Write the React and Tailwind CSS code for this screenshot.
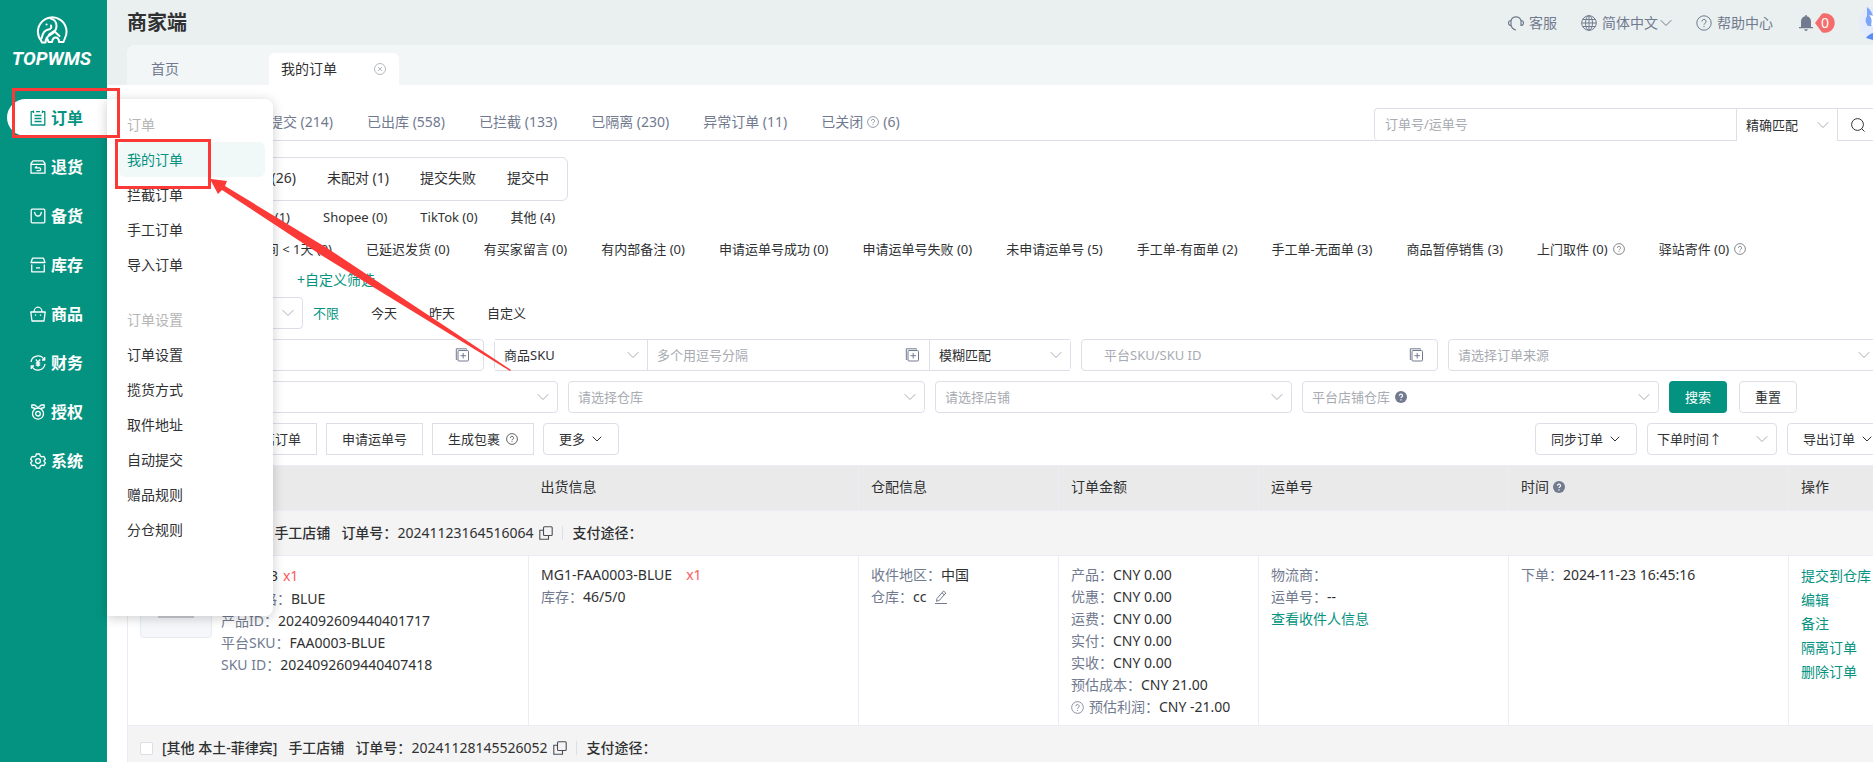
import clsx from 'clsx'

const SIDE_MENU = [
  { key: 'order', label: '订单', active: true },
  { key: 'return', label: '退货' },
  { key: 'stock', label: '备货' },
  { key: 'inventory', label: '库存' },
  { key: 'goods', label: '商品' },
  { key: 'finance', label: '财务' },
  { key: 'auth', label: '授权' },
  { key: 'system', label: '系统' },
]

const SUB_MENU = [
  { title: '订单', items: ['我的订单', '拦截订单', '手工订单', '导入订单'] },
  { title: '订单设置', items: ['订单设置', '揽货方式', '取件地址', '自动提交', '赠品规则', '分仓规则'] },
]

const STATUS_TABS = [
  { label: '已出库 (558)' },
  { label: '已拦截 (133)' },
  { label: '已隔离 (230)' },
  { label: '异常订单 (11)' },
  { label: '已关闭', help: true, count: '(6)' },
]

const TAG_FILTERS = [
  { label: '已延迟发货 (0)' },
  { label: '有买家留言 (0)' },
  { label: '有内部备注 (0)' },
  { label: '申请运单号成功 (0)' },
  { label: '申请运单号失败 (0)' },
  { label: '未申请运单号 (5)' },
  { label: '手工单-有面单 (2)' },
  { label: '手工单-无面单 (3)' },
  { label: '商品暂停销售 (3)' },
  { label: '上门取件 (0)', help: true },
  { label: '驿站寄件 (0)', help: true },
]

const AMOUNTS = [
  ['产品', 'CNY 0.00'],
  ['优惠', 'CNY 0.00'],
  ['运费', 'CNY 0.00'],
  ['实付', 'CNY 0.00'],
  ['实收', 'CNY 0.00'],
  ['预估成本', 'CNY 21.00'],
]

const MENU_ICONS = {
  order: (
    <>
      <path d="M3.500 1.700H1.200v13.300h13.600V1.700h-2.300M6 1.700h4" />
      <path d="M3.500.5v2.500M12.500.5v2.500M4.500 5.500h7M4.500 8.500h7M4.500 11.500h7" />
    </>
  ),
  return: (
    <>
      <path d="M3 1.800h10l2 2.700v9.700H1V4.500zM1 5.300h14" />
      <path d="M6.800 7.200 5.300 8.800h4a1.400 1.400 0 0 1 0 2.800H6.500" />
    </>
  ),
  stock: (
    <>
      <rect x="1.200" y="1.200" width="13.600" height="13.600" rx="1" />
      <path d="M4.500 3.800c.5 3 2 4.200 3.500 4.200s3-1.200 3.500-4.200" />
    </>
  ),
  inventory: (
    <>
      <path d="M2.500 1.200h11L15 5.500H1z" />
      <path d="M1.700 7.500v7.300h12.600V7.500M6 10.800h4" />
    </>
  ),
  goods: (
    <>
      <path d="M.8 6h14.400L14 15H2z" />
      <path d="M4 6a4 4.800 0 0 1 8 0M5.500 8.500v1.200M10.500 8.500v1.200" />
    </>
  ),
  finance: (
    <>
      <path d="M1 7A7 7 0 0 1 14 4.500M15 9A7 7 0 0 1 2 11.500" />
      <path d="M14.700 2v3H12M1.300 14v-3H4" />
      <path d="M5.800 4.500 8 7.200l2.200-2.700M8 7.200v4.500M5.800 8h4.400M5.800 10h4.400" />
    </>
  ),
  auth: (
    <>
      <circle cx="8" cy="9.700" r="5.500" />
      <circle cx="8" cy="9.700" r="2.300" />
      <path d="M5.500 4.500 1.800 3.500V1h3L8 3.700 11.200 1h3v2.500l-3.700 1" />
    </>
  ),
  system: (
    <>
      <path d="M6.300 1h3.400l.6 2 1.500.9 2-.5 1.600 2.900L14 7.800v.6l1.400 1.400-1.600 2.900-2-.5-1.500.9-.6 2H6.300l-.6-2-1.500-.9-2 .5L.6 9.800 2 8.400v-.6L.6 6.300l1.600-2.900 2 .5 1.500-.9z" />
      <circle cx="8" cy="8" r="2.400" />
    </>
  ),
}

const MenuIcon = ({ name }) => (
  <svg viewBox="0 0 16 16" className="h-4 w-4 shrink-0" fill="none" stroke="currentColor" strokeWidth="1.300" strokeLinejoin="round">
    {MENU_ICONS[name]}
  </svg>
)

const Chevron = ({ className }) => (
  <svg viewBox="0 0 12 8" className={clsx('h-2 w-3 shrink-0', className)} fill="none" stroke="currentColor">
    <path d="M.7 1.200 6 6.500l5.300-5.300" />
  </svg>
)

// smaller chevron used inside buttons
const ButtonChevron = () => (
  <svg viewBox="0 0 10 8" className="mx-px h-2 w-2.5 shrink-0" fill="none" stroke="currentColor">
    <path d="M.7 1.700 5 6l4.300-4.300" />
  </svg>
)

const HelpIcon = ({ className }) => (
  <svg viewBox="0 0 16 16" className={clsx('shrink-0', className)} fill="none" stroke="currentColor">
    <circle cx="8" cy="8" r="7.200" />
    <path d="M5.900 6.500a2.100 2.100 0 1 1 3 1.900c-.6.3-.9.600-.9 1.300" />
    <path d="M8 11v1.200" />
  </svg>
)

const HelpSolid = ({ className }) => (
  <svg viewBox="0 0 16 16" className={clsx('h-3 w-3 shrink-0', className)} fill="none" stroke="#fff" strokeWidth="1.600">
    <circle cx="8" cy="8" r="8" fill="#717a8f" stroke="none" />
    <path d="M5.900 6.200a2.100 2.100 0 1 1 3 1.900c-.6.3-.9.600-.9 1.300M8 11v1.700" />
  </svg>
)

const CopyIcon = () => (
  <svg viewBox="0 0 14 14" className="h-3.5 w-3.5" fill="none" stroke="#4a4d55" strokeWidth="1.100">
    <rect x="4.500" y=".8" width="8.700" height="8.700" rx="1" />
    <path d="M4.500 4.200H.8v9h8.700V9.500" />
  </svg>
)

const BatchIcon = () => (
  <svg viewBox="0 0 14 14" className="h-3.5 w-3.5 shrink-0" fill="none" stroke="#717a8f" strokeWidth="1">
    <path d="M11.500 1.500V.8H1.300v10.700h.9" />
    <rect x="3" y="2.500" width="10.500" height="10.500" rx="1" />
    <path d="M8.200 5v5.500M5.500 7.700H11" />
  </svg>
)

const Logo = () => (
  <div className="flex flex-col items-center pt-4 pr-1">
    <svg viewBox="0 0 32 28" className="h-7 w-8" fill="none" stroke="#fff" strokeWidth="2" strokeLinecap="round" strokeLinejoin="round">
      <path d="M5 24.500A14.300 14.300 0 1 1 29 22l-1.500 4H23c0-3-1.500-4.500-3.500-4.500S16.500 23 16 26h-3.500l-1-3" />
      <path d="M5 24.500 6 26.500h3.500c.2-4 1.500-6 4.500-7.500 4-2 6.500-4.500 6.500-9 0-4-2.500-7-6-7.500" />
      <path d="M15 9.500c1 2-.5 4-2.500 4-4 .5-6 4-7 9M13 18.500l5-3.500 5.500 5" />
      <path d="M10.500 8.500h.1" />
    </svg>
    <div className="mt-[3px] font-['Liberation_Sans_Narrow','Roboto',sans-serif] text-[19px] leading-6 font-bold text-white italic">TOPWMS</div>
  </div>
)

const Sidebar = () => (
  <aside className="w-[107px] shrink-0 bg-[#059381]">
    <Logo />
    <nav className="mt-6 flex flex-col gap-3 pt-1 pl-[7px]">
      {SIDE_MENU.map((item) => (
        <a
          key={item.key}
          href="#"
          className={clsx(
            'flex h-[37px] items-center gap-[5px] rounded-l-full pl-[23px] text-base font-bold',
            item.active ? 'bg-white text-[#059381]' : 'text-white'
          )}
        >
          <MenuIcon name={item.key} />
          {item.label}
        </a>
      ))}
    </nav>
  </aside>
)

const FlyoutMenu = () => (
  <div className="absolute top-[99px] left-[107px] z-20 h-[517px] w-[166px] rounded-r-lg bg-white pt-2 pr-2 pl-3 shadow-[0_2px_12px_rgba(0,0,0,0.2)]">
    {SUB_MENU.map((group) => (
      <div key={group.title} className="mb-5">
        <div className="h-[35px] pl-2 leading-[35px] text-[#b5b5b5]">{group.title}</div>
        {group.items.map((item) => (
          <a
            key={item}
            href="#"
            className={clsx(
              'block h-[35px] rounded-md pl-2 leading-[35px]',
              item === '我的订单' ? 'bg-[#f1f9f8] text-[#059381]' : 'text-[#303133]'
            )}
          >
            {item}
          </a>
        ))}
      </div>
    ))}
  </div>
)

const Header = () => (
  <header className="flex h-[45px] items-center justify-between bg-[#eaf0ef] pl-5 text-[#717a8f]">
    <h1 className="text-xl font-bold text-[#303133]">商家端</h1>
    <div className="-mr-5 flex items-center">
      <a href="#" className="flex items-center gap-[5px]">
        <svg viewBox="0 0 16 16" className="h-4 w-4" fill="none" stroke="currentColor" strokeWidth="1.200">
          <path d="M3 5.500A5.300 5.300 0 0 1 13 5.500M3 10.500c.8 2.500 2.500 4 5 4.500" />
          <path d="M3 5.500a2.500 2.500 0 0 0 0 5zM13 5.500a2.500 2.500 0 0 1 0 5z" />
        </svg>
        客服
      </a>
      <button type="button" className="ml-6 flex items-center gap-[5px]">
        <svg viewBox="0 0 16 16" className="h-4 w-4" fill="none" stroke="currentColor">
          <circle cx="8" cy="8" r="7.300" />
          <ellipse cx="8" cy="8" rx="3.500" ry="7.300" />
          <path d="M8 .7v14.600M.7 8h14.600M1.800 4.500h12.400M1.800 11.500h12.400" />
        </svg>
        <span className="flex items-center gap-[2px]">
          简体中文
          <Chevron />
        </span>
      </button>
      <a href="#" className="ml-6 flex items-center gap-[5px]">
        <HelpIcon className="h-4 w-4" />
        帮助中心
      </a>
      <button type="button" aria-label="通知" className="ml-[26px] flex items-center gap-[2px]">
        <svg viewBox="0 0 14 16" className="h-4 w-3.5" fill="currentColor">
          <path d="M6.300 0h1.400v1.300C10.300 1.600 12 3.700 12 6.300V12h2v1.300H0V12h2V6.300c0-2.600 1.700-4.700 4.300-5zM5.300 14.300h3.400c0 1-.7 1.700-1.700 1.700s-1.700-.7-1.700-1.700z" />
        </svg>
        <span className="relative flex h-5 w-5 items-center justify-center text-white">
          <svg viewBox="0 0 20 20" className="absolute h-5 w-5" fill="#f56c6c">
            <path d="M0 10 6 2a3 3 0 0 1 2.500-1.700A9.800 9.800 0 1 1 8.500 19.700 3 3 0 0 1 6 18z" />
          </svg>
          <span className="relative">0</span>
        </span>
      </button>
      <svg viewBox="0 0 34 34" className="ml-6 h-[34px] w-[34px]">
        <circle cx="17" cy="17" r="17" fill="#e4ebfd" />
        <path d="M8 1c4 3 5 6 6 9l10 2v8H9c-3-4-3-7-1-10z" fill="#7ea6f8" />
        <path d="M10 9c3 3 3 6 2 10l4 3V10z" fill="#fff" />
        <path d="M7 32c3-4 8-6 14-6v8H14z" fill="#5b8cf5" />
      </svg>
    </div>
  </header>
)

const PageTabs = () => (
  <div className="bg-[#eaf0ef] pl-5">
    <div className="flex h-10 items-end rounded-tl-lg bg-[#f2f6f7] pl-6">
      <a href="#" className="h-8 w-[118px] leading-8 text-[#717a8f]">首页</a>
      <div className="flex h-8 w-[130px] items-center justify-between rounded-t-md bg-white pr-[13px] pl-3 text-[#303133]">
        我的订单
        <button type="button" aria-label="关闭">
          <svg viewBox="0 0 12 12" className="h-3 w-3" fill="none" stroke="#b4b8c0">
            <circle cx="6" cy="6" r="5.500" />
            <path d="m4 4 4 4M8 4 4 8" />
          </svg>
        </button>
      </div>
    </div>
  </div>
)

const SelectBox = ({ label, value, placeholder, help, className }) => (
  <div className={clsx('relative flex h-8 items-center border-[#dcdee8] bg-white', className)}>
    <select
      aria-label={label}
      className={clsx(
        'h-full w-full appearance-none bg-transparent pr-8 pl-[9px] text-[13px] outline-none',
        placeholder ? 'text-[#a8abb2]' : 'text-[#303133]'
      )}
    >
      <option>{value}</option>
    </select>
    {help && <HelpSolid className="pointer-events-none absolute left-[92px]" />}
    <Chevron className="pointer-events-none absolute right-2 text-[#a8abb2]" />
  </div>
)

const BatchInput = ({ label, placeholder, className, inputClassName }) => (
  <div className={clsx('flex h-8 items-center border-[#dcdee8] bg-white', className)}>
    <input
      type="text"
      aria-label={label}
      placeholder={placeholder}
      className={clsx('h-full w-full min-w-0 text-[13px] outline-none placeholder:text-[#a8abb2]', inputClassName)}
    />
    <button type="button" aria-label="批量输入">
      <BatchIcon />
    </button>
  </div>
)

const StatusBar = () => (
  <div className="flex h-14 items-end justify-between border-b border-[#dcdee8]">
    <div className="flex h-9 items-center gap-[34px] text-[#717a8f]">
      <a href="#" className="w-[206px] text-right">已提交 (214)</a>
      {STATUS_TABS.map((tab) => (
        <a key={tab.label} href="#" className="flex items-center gap-1">
          {tab.label}
          {tab.help && <HelpIcon className="h-3 w-3" />}
          {tab.count}
        </a>
      ))}
    </div>
    <form className="flex h-8 w-[505px] rounded-sm border border-b-0 border-[#dcdee8]">
      <input
        type="text"
        aria-label="订单号/运单号"
        placeholder="订单号/运单号"
        className="min-w-0 flex-1 pl-2.5 text-[13px] outline-none placeholder:text-[#a8abb2]"
      />
      <SelectBox label="匹配方式" value="精确匹配" className="w-[101px] border-l" />
      <button type="button" aria-label="搜索" className="flex w-[41px] items-center justify-center border-l border-[#dcdee8]">
        <svg viewBox="0 0 14 14" className="h-3.5 w-3.5" fill="none" stroke="#303133">
          <circle cx="6.500" cy="6.500" r="5.900" />
          <path d="m10.700 10.700 2.800 2.800" />
        </svg>
      </button>
    </form>
  </div>
)

const QuickFilters = () => (
  <>
    <div className="mt-4 flex h-11 w-[441px] items-center gap-[31px] rounded-md border border-[#dcdee8] pr-[18px] pb-0.5">
      <a href="#" className="flex-1 text-right">已配对 (26)</a>
      <a href="#">未配对 (1)</a>
      <a href="#">提交失败</a>
      <a href="#">提交中</a>
    </div>
    <div className="flex h-[34px] items-center gap-[33px] pb-0.5 text-[13px]">
      <a href="#" className="w-[163px] text-right">Lazada (1)</a>
      <a href="#">Shopee (0)</a>
      <a href="#">TikTok (0)</a>
      <a href="#">其他 (4)</a>
    </div>
    <div className="flex h-7 items-center gap-[34px] text-[13px] whitespace-nowrap">
      <a href="#" className="w-[205px] text-right">剩余发货时间 &lt; 1天 (0)</a>
      {TAG_FILTERS.map((tag) => (
        <a key={tag.label} href="#" className="flex items-center gap-[5px]">
          {tag.label}
          {tag.help && <HelpIcon className="h-3 w-3 text-[#606266]" />}
        </a>
      ))}
    </div>
    <div className="flex h-[34px] items-center pl-[170px]">
      <button type="button" className="text-[#059381]">+自定义筛选</button>
    </div>
    <div className="flex h-8 items-center text-[13px]">
      <SelectBox label="时间类型" className="w-[176px] rounded-sm border" />
      <div className="ml-2.5 flex gap-8">
        <a href="#" className="text-[#059381]">不限</a>
        <a href="#">今天</a>
        <a href="#">昨天</a>
        <a href="#">自定义</a>
      </div>
    </div>
  </>
)

const SearchForm = () => (
  <form className="mt-2.5 flex flex-col gap-2.5">
    <div className="grid grid-cols-[357fr_577fr_357fr_431fr] gap-2.5">
      <BatchInput label="订单号" className="rounded-sm border pr-3.5" />
      <div className="flex rounded-sm border border-[#dcdee8]">
        <SelectBox label="SKU类型" value="商品SKU" className="-my-px w-[152px] border-y" />
        <BatchInput label="SKU" placeholder="多个用逗号分隔" className="-my-px flex-1 border-x border-y pr-2.5" inputClassName="pl-[9px]" />
        <SelectBox label="SKU匹配方式" value="模糊匹配" className="-my-px w-[140px] border-y" />
      </div>
      <BatchInput label="平台SKU" placeholder="平台SKU/SKU ID" className="rounded-sm border pr-3.5" inputClassName="pl-[22px]" />
      <SelectBox label="订单来源" value="请选择订单来源" placeholder className="rounded-sm border" />
    </div>
    <div className="grid grid-cols-[431fr_357fr_357fr_357fr_210fr] gap-2.5">
      <SelectBox label="物流" placeholder className="rounded-sm border" />
      <SelectBox label="仓库" value="请选择仓库" placeholder className="rounded-sm border" />
      <SelectBox label="店铺" value="请选择店铺" placeholder className="rounded-sm border" />
      <SelectBox label="平台店铺仓库" value="平台店铺仓库" placeholder help className="rounded-sm border" />
      <div className="flex gap-3 text-[13px]">
        <button type="button" className="h-8 w-[58px] rounded-sm bg-[#059381] text-white">搜索</button>
        <button type="button" className="h-8 w-[58px] rounded-sm border border-[#dcdee8]">重置</button>
      </div>
    </div>
  </form>
)

const Toolbar = () => (
  <div className="mt-2.5 -mr-2.5 flex justify-between text-[13px]">
    <div className="flex gap-[9px] pl-[106px]">
      <button type="button" className="h-8 border border-[#dcdee8] px-[15px]">隔离订单</button>
      <button type="button" className="h-8 border border-[#dcdee8] px-[15px]">申请运单号</button>
      <button type="button" className="flex h-8 items-center gap-1.5 border border-[#dcdee8] px-[15px]">
        生成包裹
        <HelpIcon className="h-3 w-3" />
      </button>
      <button type="button" className="flex h-8 items-center gap-1.5 rounded-sm border border-[#dcdee8] px-[15px]">
        更多
        <ButtonChevron />
      </button>
    </div>
    <div className="flex gap-2.5">
      <button type="button" className="flex h-8 items-center gap-1.5 rounded-sm border border-[#dcdee8] px-[15px]">
        同步订单
        <ButtonChevron />
      </button>
      <SelectBox label="排序" value="下单时间↑" className="w-[130px] rounded-sm border" />
      <button type="button" className="flex h-8 items-center gap-1.5 rounded-sm border border-[#dcdee8] px-[15px]">
        导出订单
        <ButtonChevron />
      </button>
    </div>
  </div>
)

const Field = ({ label, children }) => (
  <div className="flex h-[22px] items-center">
    <span className="text-[#717a8f]">{label}：</span>
    <span>{children}</span>
  </div>
)

const OrderBar = ({ platform, orderNo }) => (
  <tr className="h-[45px] border-y border-[#ebecf5] bg-[#f4f4f4]">
    <td colSpan={7}>
      <div className="flex items-center pl-3 font-medium">
        <input type="checkbox" aria-label={orderNo} className="h-[13px] w-[13px] appearance-none rounded-xs border border-[#dcdee8] bg-white" />
        <span className="ml-[9px]">{platform}</span>
        <span className="ml-[11px]">手工店铺</span>
        <span className="ml-[11px]">订单号：</span>
        <span className="mr-[5px] font-normal">{orderNo}</span>
        <button type="button" aria-label="复制">
          <CopyIcon />
        </button>
        <span className="mr-2.5 ml-[9px] h-3.5 w-px bg-[#dcdee8]" />
        支付途径：
      </div>
    </td>
  </tr>
)

const OrderTable = () => (
  <table className="mt-2.5 w-full table-fixed border-collapse border border-[#ebecf5] text-left">
    <colgroup>
      <col className="w-[401px]" />
      <col className="w-[330px]" />
      <col className="w-[200px]" />
      <col className="w-[200px]" />
      <col className="w-[250px]" />
      <col className="w-[280px]" />
      <col />
    </colgroup>
    <thead>
      <tr className="h-[45px] bg-[#eaeaea] *:pb-0.5 *:font-normal">
        <th aria-label="商品信息" />
        <th className="pl-3">出货信息</th>
        <th className="border-l border-[#ebecf5] pl-3">仓配信息</th>
        <th className="border-l border-[#ebecf5] pl-3">订单金额</th>
        <th className="border-l border-[#ebecf5] pl-3">运单号</th>
        <th className="border-l border-[#ebecf5] pl-3">
          <span className="flex items-center gap-1">
            时间
            <HelpSolid />
          </span>
        </th>
        <th className="border-l border-[#ebecf5] pl-3">操作</th>
      </tr>
    </thead>
    <tbody>
      <OrderBar platform="[其他 本土-泰国]" orderNo="20241123164516064" />
      <tr className="h-[170px] *:border-l *:border-[#ebecf5] *:pt-2 *:pl-3 *:align-top">
        <td>
          <div className="flex gap-[9px]">
            <div className="mt-0.5 flex h-[72px] w-[72px] items-center justify-center rounded-sm border border-[#e8ebf2] bg-[#f5f7fa]">
              <span className="h-8 w-9 bg-[#c9ccd3]" />
            </div>
            <div>
              <div className="flex h-6 items-center gap-[5px]">
                FAA0003 <span className="text-[#fb5a5a]">x1</span>
              </div>
              <Field label="产品规格">BLUE</Field>
              <Field label="产品ID">2024092609440401717</Field>
              <Field label="平台SKU">FAA0003-BLUE</Field>
              <Field label="SKU ID">2024092609440407418</Field>
            </div>
          </div>
        </td>
        <td>
          <div className="flex h-[22px] items-center gap-3.5">
            MG1-FAA0003-BLUE <span className="text-[#fb5a5a]">x1</span>
          </div>
          <Field label="库存">46/5/0</Field>
        </td>
        <td>
          <Field label="收件地区">中国</Field>
          <Field label="仓库">
            <span className="flex items-center gap-2">
              cc
              <svg viewBox="0 0 14 14" className="h-3.5 w-3.5" fill="none" stroke="#717a8f">
                <path d="M1 13.500h12M2.500 11.300 3 8.500 9.500 1l2.300 2-6.500 7.400zM8 2.800l2.200 1.900" />
              </svg>
            </span>
          </Field>
        </td>
        <td>
          {AMOUNTS.map(([label, value]) => (
            <Field key={label} label={label}>{value}</Field>
          ))}
          <div className="flex items-center gap-[5px]">
            <HelpIcon className="h-[13px] w-[13px] text-[#717a8f]" />
            <Field label="预估利润">CNY -21.00</Field>
          </div>
        </td>
        <td>
          <Field label="物流商" />
          <Field label="运单号">--</Field>
          <a href="#" className="block leading-[22px] text-[#059381]">查看收件人信息</a>
        </td>
        <td>
          <Field label="下单">2024-11-23 16:45:16</Field>
        </td>
        <td className="leading-6 whitespace-nowrap text-[#059381]">
          <a href="#" className="block">提交到仓库</a>
          <a href="#" className="block">编辑</a>
          <a href="#" className="block">备注</a>
          <a href="#" className="block">隔离订单</a>
          <a href="#" className="block">删除订单</a>
        </td>
      </tr>
      <OrderBar platform="[其他 本土-菲律宾]" orderNo="20241128145526052" />
    </tbody>
  </table>
)

// red guide marks laid over the menu
const GuideMarks = () => (
  <div className="pointer-events-none absolute inset-0 z-30">
    <div className="absolute top-[88px] left-3 h-[50px] w-[108px] border-3 border-[#fb3a38]" />
    <div className="absolute top-[139px] left-[115px] h-[50px] w-24 border-3 border-[#fb3a38]" />
    <svg viewBox="0 0 300 192" className="absolute top-[179px] left-[211px] h-48 w-[300px]" fill="#fb3a38">
      <path d="M-1 0 16 2l-2 5 102 62 184 122-1 1L110 76 11 11l-4 4z" />
    </svg>
  </div>
)

const App = () => (
  <div className="relative flex h-screen overflow-hidden bg-white font-['Noto_Sans','Noto_Sans_CJK_SC',sans-serif] text-sm text-[#303133]">
    <Sidebar />
    <main className="min-w-0 flex-1 overflow-hidden">
      <Header />
      <PageTabs />
      <div className="w-[calc(100%+6px)] pl-5">
        <StatusBar />
        <QuickFilters />
        <SearchForm />
        <Toolbar />
        <OrderTable />
      </div>
    </main>
    <FlyoutMenu />
    <GuideMarks />
  </div>
)

export default App
